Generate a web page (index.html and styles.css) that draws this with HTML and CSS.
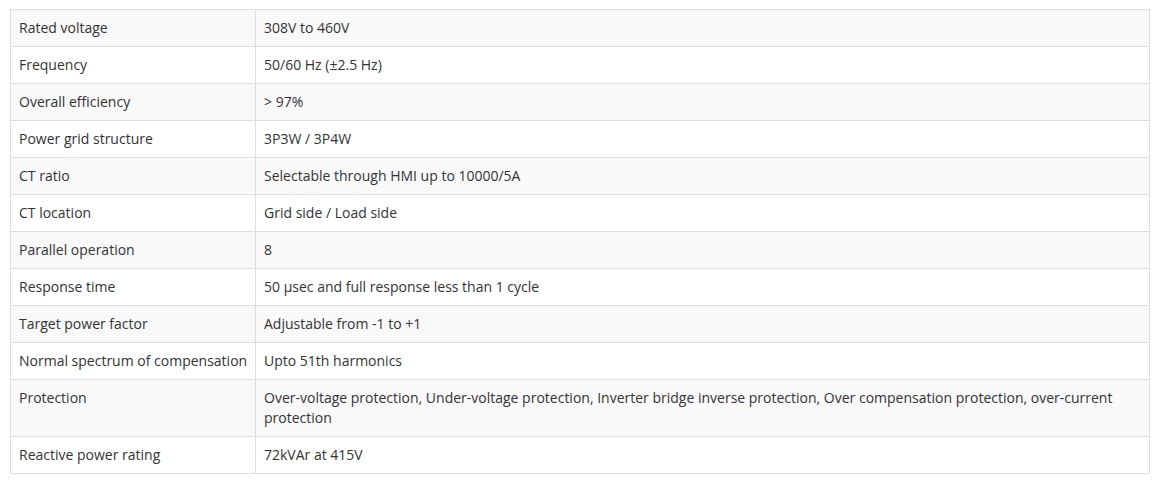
FILE: index.html
```
<!DOCTYPE html>
<html>
<head>
<meta charset="utf-8">
<link rel="stylesheet" href="styles.css">
</head>
<body>
<table class="spec">
<tbody>
<tr><td class="k">Rated voltage</td><td>308V to 460V</td></tr>
<tr><td class="k">Frequency</td><td>50/60 Hz (±2.5 Hz)</td></tr>
<tr><td class="k">Overall efficiency</td><td>&gt; 97%</td></tr>
<tr><td class="k">Power grid structure</td><td>3P3W / 3P4W</td></tr>
<tr><td class="k">CT ratio</td><td>Selectable through HMI up to 10000/5A</td></tr>
<tr><td class="k">CT location</td><td>Grid side / Load side</td></tr>
<tr><td class="k">Parallel operation</td><td>8</td></tr>
<tr><td class="k">Response time</td><td>50 µsec and full response less than 1 cycle</td></tr>
<tr><td class="k">Target power factor</td><td>Adjustable from -1 to +1</td></tr>
<tr><td class="k">Normal spectrum of compensation</td><td>Upto 51th harmonics</td></tr>
<tr><td class="k">Protection</td><td>Over-voltage protection, Under-voltage protection, Inverter bridge inverse protection, Over compensation protection, over-current protection</td></tr>
<tr><td class="k">Reactive power rating</td><td>72kVAr at 415V</td></tr>
</tbody>
</table>
</body>
</html>
```
FILE: styles.css
```
html, body {
  margin: 0;
  padding: 0;
  background: #fff;
}
body {
  padding: 9px 0 0 10px;
  font-family: "Open Sans", sans-serif;
  font-size: 14px;
  line-height: 20px;
  color: #333;
}
.spec {
  width: 1140px;
  border-collapse: collapse;
  border: 1px solid #ddd;
  table-layout: fixed;
}
.spec td {
  border: 1px solid #ddd;
  padding: 8px 8px;
  vertical-align: top;
  text-align: left;
}
.spec td.k {
  width: 228px;
  white-space: nowrap;
}
.spec tr:nth-child(odd) td {
  background: #f9f9f9;
}
```
